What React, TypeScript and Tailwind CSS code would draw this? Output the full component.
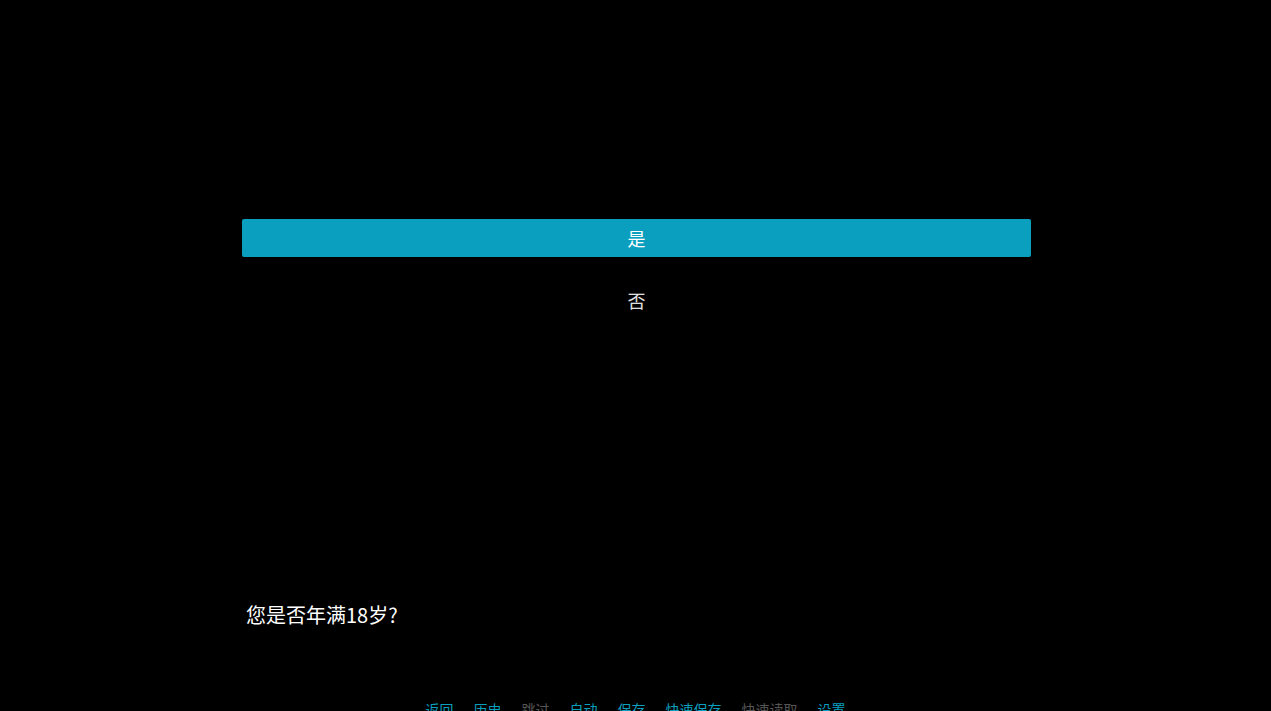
const FONT = { fontFamily: '"Noto Sans CJK SC", "Noto Sans", sans-serif' };

const menu: { label: string; enabled: boolean }[] = [
  { label: '返回', enabled: true },
  { label: '历史', enabled: true },
  { label: '跳过', enabled: false },
  { label: '自动', enabled: true },
  { label: '保存', enabled: true },
  { label: '快速保存', enabled: true },
  { label: '快速读取', enabled: false },
  { label: '设置', enabled: true },
];

export default function App() {
  return (
    <div className="relative flex h-[711px] w-full flex-col overflow-hidden bg-black" style={FONT}>
      {/* Choices */}
      <div className="ml-[242px] mt-[219px] flex w-[789px] flex-col gap-[24px]">
        <button className="flex h-[38px] items-center justify-center rounded-[2px] bg-[#0a9fbf] text-[18px] text-white">
          是
        </button>
        <button className="flex h-[38px] items-center justify-center text-[18px] text-[#e0e0e0]">
          否
        </button>
      </div>

      {/* Dialogue */}
      <div className="mx-auto mt-[282px] w-[789px] pl-[5px] text-[20px] leading-[28px] text-white">
        您是否年满18岁?
      </div>

      {/* Quick menu */}
      <div className="mt-[70px] flex justify-center gap-[20px] text-[14px] leading-[20px]">
        {menu.map((m) => (
          <span key={m.label} className={m.enabled ? 'text-[#0a9fbf]' : 'text-[#555555]'}>
            {m.label}
          </span>
        ))}
      </div>
    </div>
  );
}
